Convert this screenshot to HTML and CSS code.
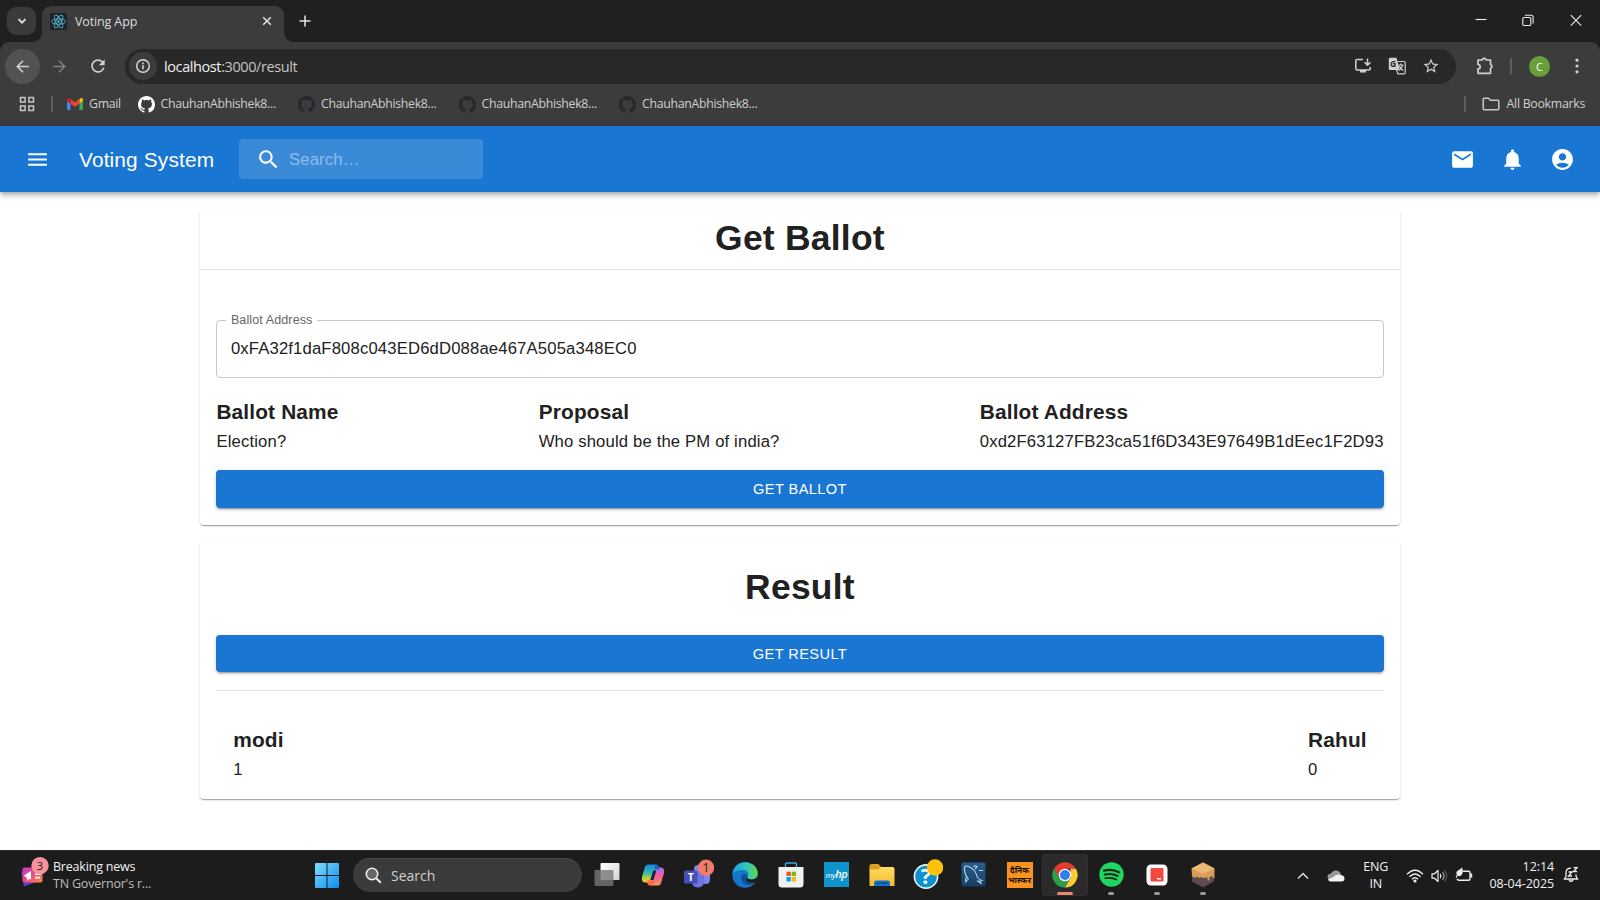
FILE: index.html
```html
<!DOCTYPE html>
<html lang="en">
<head>
<meta charset="utf-8">
<title>Voting App</title>
<link rel="stylesheet" href="styles.css">
</head>
<body>
<svg width="0" height="0" class="defs">
  <defs>
    <symbol id="github" viewBox="0 0 16 16"><path d="M8 0C3.58 0 0 3.58 0 8c0 3.54 2.29 6.53 5.47 7.59.4.07.55-.17.55-.38 0-.19-.01-.82-.01-1.49-2.01.37-2.53-.49-2.69-.94-.09-.23-.48-.94-.82-1.13-.28-.15-.68-.52-.01-.53.63-.01 1.08.58 1.23.82.72 1.21 1.87.87 2.33.66.07-.52.28-.87.51-1.07-1.78-.2-3.64-.89-3.64-3.95 0-.87.31-1.59.82-2.15-.08-.2-.36-1.02.08-2.12 0 0 .67-.21 2.2.82.64-.18 1.32-.27 2-.27s1.36.09 2 .27c1.53-1.04 2.2-.82 2.2-.82.44 1.1.16 1.92.08 2.12.51.56.82 1.27.82 2.15 0 3.07-1.87 3.75-3.65 3.95.29.25.54.73.54 1.48 0 1.07-.01 1.93-.01 2.2 0 .21.15.46.55.38A8.01 8.01 0 0 0 16 8c0-4.42-3.58-8-8-8z"/></symbol>
    <linearGradient id="gWin" x1="0" y1="0" x2="1" y2="1"><stop offset="0" stop-color="#7fdcff"/><stop offset="1" stop-color="#0b8df0"/></linearGradient>
    <linearGradient id="gView" x1="0" y1="0" x2="1" y2="1"><stop offset="0" stop-color="#fff"/><stop offset="1" stop-color="#d4d4d4"/></linearGradient>
    <linearGradient id="gCopA" x1="0" y1="0" x2="0" y2="1"><stop offset="0" stop-color="#1787e8"/><stop offset=".45" stop-color="#2fb8b4"/><stop offset=".75" stop-color="#b5cf3d"/><stop offset="1" stop-color="#ffc52a"/></linearGradient>
    <linearGradient id="gCopB" x1="0" y1="0" x2="0" y2="1"><stop offset="0" stop-color="#b06bf0"/><stop offset=".5" stop-color="#ef5fa0"/><stop offset="1" stop-color="#ff9a4c"/></linearGradient>
    <linearGradient id="gEdge" x1="0" y1="0" x2="1" y2="0"><stop offset="0" stop-color="#1c9ee0"/><stop offset=".5" stop-color="#2fc2c8"/><stop offset="1" stop-color="#62d94f"/></linearGradient>
    <linearGradient id="gFold" x1="0" y1="0" x2="0" y2="1"><stop offset="0" stop-color="#ffdc62"/><stop offset="1" stop-color="#f6bc2c"/></linearGradient>
    <linearGradient id="gNews" x1="0" y1="0" x2="1" y2="1"><stop offset="0" stop-color="#c23bc4"/><stop offset=".5" stop-color="#ee4c83"/><stop offset="1" stop-color="#ff8a45"/></linearGradient>
    <linearGradient id="gSql" x1="0" y1="0" x2="0" y2="1"><stop offset="0" stop-color="#255f8e"/><stop offset="1" stop-color="#163f63"/></linearGradient>
  </defs>
</svg>

<header class="browser">
  <div class="tabstrip">
    <button class="tab-search"><svg width="12" height="12" viewBox="0 0 12 12" class="line"><path d="M2.500 4.200 6 7.700l3.500-3.500" stroke-width="1.900"/></svg></button>
    <div class="tab">
      <svg class="favicon" width="17" height="17" viewBox="0 0 17 17"><rect width="17" height="17" rx="2" fill="#1f2329"/><g fill="none" stroke="#58b8d3" stroke-width=".9"><ellipse cx="8.500" cy="8.500" rx="7" ry="2.700"/><ellipse cx="8.500" cy="8.500" rx="7" ry="2.700" transform="rotate(60 8.500 8.500)"/><ellipse cx="8.500" cy="8.500" rx="7" ry="2.700" transform="rotate(120 8.500 8.500)"/></g><circle cx="8.500" cy="8.500" r="1.300" fill="#58b8d3"/></svg>
      <span class="tab-title">Voting App</span>
      <svg class="line" width="10" height="10" viewBox="0 0 10 10"><path d="M1.200 1.200l7.600 7.600M8.800 1.200 1.200 8.800" stroke-width="1.600"/></svg>
    </div>
    <svg class="line new-tab" width="12" height="12" viewBox="0 0 12 12"><path d="M6 .5v11M.5 6h11" stroke-width="1.600"/></svg>
    <div class="window-controls">
      <svg width="48" height="40" viewBox="0 0 48 40" class="line thin"><path d="M19.500 19.500h11"/></svg>
      <svg width="48" height="40" viewBox="0 0 48 40" class="line thin"><rect x="18.800" y="17.500" width="8" height="8" rx="1.200"/><path d="M20.800 15.300h6.300q2 0 2 2v6.300"/></svg>
      <svg width="48" height="40" viewBox="0 0 48 40" class="line thin"><path d="m18.800 15.200 10.400 10.400m0-10.400L18.800 25.600"/></svg>
    </div>
  </div>

  <div class="toolbar">
    <span class="nav-btn nav-back"><svg width="19" height="19" viewBox="0 0 24 24"><path d="M20 11H7.830l5.590-5.590L12 4l-8 8 8 8 1.410-1.410L7.830 13H20v-2z"/></svg></span>
    <span class="nav-btn nav-forward"><svg width="19" height="19" viewBox="0 0 24 24"><path d="M12 4l-1.410 1.410L16.170 11H4v2h12.170l-5.580 5.590L12 20l8-8z"/></svg></span>
    <span class="nav-btn nav-reload"><svg width="20" height="20" viewBox="0 0 24 24"><path d="M17.650 6.350A7.958 7.958 0 0 0 12 4c-4.420 0-7.990 3.580-7.990 8s3.570 8 7.990 8c3.730 0 6.840-2.550 7.730-6h-2.080A5.990 5.990 0 0 1 12 18c-3.310 0-6-2.690-6-6s2.690-6 6-6c1.660 0 3.140.69 4.220 1.780L13 11h7V4l-2.350 2.350z"/></svg></span>
    <div class="omnibox">
      <span class="site-info"><svg width="16" height="16" viewBox="0 0 16 16"><circle cx="8" cy="8" r="6.300" fill="none" stroke="#dcdcdc" stroke-width="1.400"/><path d="M7.200 7.200h1.600v4H7.200zM7.200 4.600h1.600v1.600H7.200z"/></svg></span>
      <span class="url">localhost<i>:3000/result</i></span>
      <span class="omni-icons">
        <svg width="18" height="18" viewBox="0 0 18 18"><path fill="none" stroke="#d0d0d0" stroke-width="1.500" d="M9 2.500H3q-1.200 0-1.200 1.200v8q0 1.200 1.200 1.200h12q1.200 0 1.200-1.200V10M13.500 1.500v6.500M10.500 5.200l3 3 3-3"/><path d="M6 13h6v2.500H6z"/></svg>
        <svg width="18" height="18" viewBox="0 0 18 18"><path d="M2 .8h6.500L11.700 13H2Q.8 13 .8 12V2Q.8.800 2 .8z"/><text x="2" y="10" font-size="8.500" class="g-letter">G</text><path fill="none" stroke="#d0d0d0" stroke-width="1.200" d="M9.500 4.500h6.500q1.200 0 1.200 1.200v10q0 1.200-1.200 1.200H10L8.500 13M10.200 8h5.300M12.800 6.600V8M14.700 8q-.8 3.600-4 5.500M11.300 9q1.100 3 4 4.500"/></svg>
        <svg width="18" height="18" viewBox="0 0 24 24"><path d="M22 9.240l-7.190-.62L12 2 9.190 8.630 2 9.240l5.460 4.730L5.820 21 12 17.270 18.180 21l-1.630-7.030L22 9.240zM12 15.400l-3.760 2.270 1-4.280-3.320-2.880 4.380-.38L12 6.100l1.710 4.040 4.380.38-3.320 2.880 1 4.280L12 15.400z"/></svg>
      </span>
    </div>
    <svg class="extensions" width="20" height="20" viewBox="0 0 20 20"><path fill="none" stroke="#d0d0d0" stroke-width="1.700" stroke-linejoin="round" d="M3 4h4.300a2 2 0 0 1 3.900 0h4.300v4.500a2 2 0 0 1 0 3.800V17.300H3v-4.400a2.200 2.200 0 0 0 0-4.400z"/></svg>
    <span class="divider toolbar-divider"></span>
    <span class="profile">C</span>
    <svg class="menu-dots" width="6" height="18" viewBox="0 0 6 18"><circle cx="3" cy="3.200" r="1.600"/><circle cx="3" cy="9" r="1.600"/><circle cx="3" cy="14.800" r="1.600"/></svg>
  </div>

  <div class="bookmarks">
    <svg class="apps" width="16" height="16" viewBox="0 0 16 16"><g fill="none" stroke="#c8c8c8" stroke-width="1.500"><path d="M1.500 1.500h4.600v4.600H1.500zM9.900 1.500h4.600v4.600H9.900zM1.500 9.900h4.600v4.600H1.500zM9.900 9.900h4.600v4.600H9.900z"/></g></svg>
    <span class="divider"></span>
    <span class="bookmark gmail"><svg width="16" height="12" viewBox="52 42 88 66"><path fill="#4285f4" d="M58 108h14V74L52 59v43c0 3.320 2.690 6 6 6"/><path fill="#34a853" d="M120 108h14c3.320 0 6-2.690 6-6V59l-20 15"/><path fill="#fbbc04" d="M120 48v26l20-15v-8c0-7.420-8.470-11.650-14.400-7.200"/><path fill="#ea4335" d="M72 74V48l24 18 24-18v26L96 92"/><path fill="#c5221f" d="M52 51v8l20 15V48l-5.600-4.200c-5.940-4.450-14.400-.22-14.400 7.200"/></svg><b>Gmail</b></span>
    <span class="bookmark repo first"><svg width="17" height="17"><use href="#github"/></svg><b>ChauhanAbhishek8...</b></span>
    <span class="bookmark repo"><svg width="17" height="17"><use href="#github"/></svg><b>ChauhanAbhishek8...</b></span>
    <span class="bookmark repo"><svg width="17" height="17"><use href="#github"/></svg><b>ChauhanAbhishek8...</b></span>
    <span class="bookmark repo"><svg width="17" height="17"><use href="#github"/></svg><b>ChauhanAbhishek8...</b></span>
    <span class="all-bookmarks"><span class="divider"></span><svg width="18" height="14" viewBox="0 0 18 14"><path fill="none" stroke="#c8c8c8" stroke-width="1.500" stroke-linejoin="round" d="M1.200 2.200q0-1 1-1h4.300l1.900 2h7.400q1 0 1 1v7.600q0 1-1 1H2.200q-1 0-1-1z"/></svg><b>All Bookmarks</b></span>
  </div>
</header>

<nav class="appbar">
  <svg class="mui menu" viewBox="0 0 24 24"><path d="M3 18h18v-2H3v2zm0-5h18v-2H3v2zm0-7v2h18V6H3z"/></svg>
  <span class="brand">Voting System</span>
  <div class="searchbox">
    <svg class="mui" viewBox="0 0 24 24"><path d="M15.500 14h-.79l-.28-.27C15.410 12.590 16 11.110 16 9.500 16 5.910 13.090 3 9.500 3S3 5.910 3 9.500 5.910 16 9.500 16c1.610 0 3.090-.59 4.230-1.570l.27.28v.79l5 4.990L20.490 19l-4.990-5zm-6 0C7.010 14 5 11.990 5 9.500S7.010 5 9.500 5 14 7.010 14 9.500 11.990 14 9.500 14z"/></svg>
    <span>Search…</span>
  </div>
  <div class="appbar-actions">
    <svg class="mui" viewBox="0 0 24 24"><path d="M20 4H4c-1.100 0-1.990.9-1.990 2L2 18c0 1.100.9 2 2 2h16c1.100 0 2-.9 2-2V6c0-1.100-.9-2-2-2zm0 4l-8 5-8-5V6l8 5 8-5v2z"/></svg>
    <svg class="mui" viewBox="0 0 24 24"><path d="M12 22c1.100 0 2-.9 2-2h-4c0 1.100.89 2 2 2zm6-6v-5c0-3.070-1.640-5.640-4.500-6.320V4c0-.83-.67-1.500-1.500-1.500s-1.500.67-1.500 1.500v.68C7.630 5.360 6 7.920 6 11v5l-2 2v1h16v-1l-2-2z"/></svg>
    <svg class="mui" viewBox="0 0 24 24"><path d="M12 2C6.480 2 2 6.480 2 12s4.480 10 10 10 10-4.480 10-10S17.520 2 12 2zm0 4c1.930 0 3.500 1.570 3.500 3.500S13.930 13 12 13s-3.500-1.570-3.500-3.500S10.070 6 12 6zm0 14c-2.030 0-4.430-.82-6.140-2.880C7.550 15.800 9.680 15 12 15s4.450.8 6.140 2.120C16.430 19.180 14.030 20 12 20z"/></svg>
  </div>
</nav>

<main class="content">
  <section class="card ballot-card">
    <h1 class="card-title">Get Ballot</h1>
    <div class="card-body">
      <fieldset class="field"><legend>Ballot Address</legend>0xFA32f1daF808c043ED6dD088ae467A505a348EC0</fieldset>
      <div class="facts">
        <div><h2>Ballot Name</h2><p>Election?</p></div>
        <div><h2>Proposal</h2><p>Who should be the PM of india?</p></div>
        <div><h2>Ballot Address</h2><p>0xd2F63127FB23ca51f6D343E97649B1dEec1F2D93</p></div>
      </div>
      <button class="btn">GET BALLOT</button>
    </div>
  </section>
  <section class="card result-card">
    <h1 class="card-title">Result</h1>
    <button class="btn">GET RESULT</button>
    <div class="facts tally">
      <div><h2>modi</h2><p>1</p></div>
      <div><h2>Rahul</h2><p>0</p></div>
    </div>
  </section>
</main>

<footer class="taskbar">
  <div class="news">
    <svg width="29" height="32" viewBox="0 0 29 32"><path fill="#5a3fc8" d="m1 14 3 15.500 12-4.500z"/><rect x="2.500" y="10.500" width="20" height="15" rx="2" fill="url(#gNews)"/><path fill="#fff" d="m4 18.500 7-4.500v8.500l-2-.5-1.500 1.500-.8-2.800zM15 16.500h6v1.600h-6zM15 19.800h5v1.600h-5z"/><circle cx="20" cy="8.700" r="8.700" fill="#f6929b"/><text x="20" y="12.500" text-anchor="middle" font-size="11" class="badge-num">3</text></svg>
    <div class="news-text"><b>Breaking news</b><span>TN Governor's r...</span></div>
  </div>
  <svg class="start" width="24" height="25" viewBox="0 0 24 25"><path fill="url(#gWin)" d="M1 0h10.500v12H0V1q0-1 1-1zM12.500 0H23q1 0 1 1v11H12.500zM0 13h11.500v12H1q-1 0-1-1zM12.500 13H24v11q0 1-1 1H12.500z"/></svg>
  <div class="os-search"><svg width="17" height="17" viewBox="0 0 17 17"><circle cx="7" cy="7" r="5.700" fill="#666" stroke="#ededed" stroke-width="1.600"/><path d="m11.200 11.200 4.600 4.600" stroke="#ededed" stroke-width="2"/></svg><span>Search</span></div>
  <div class="dock">
    <span class="slot"><svg width="26" height="26" viewBox="0 0 26 26"><rect x="6.500" y="1" width="19" height="17" rx="1" fill="url(#gView)"/><rect x=".5" y="8" width="19" height="16" rx="1" fill="#777" fill-opacity=".8"/></svg></span>
    <span class="slot"><svg width="26" height="26" viewBox="0 0 26 26"><path fill="url(#gCopA)" d="M8 2.500h8q2 0 3 3l.5 2H16q-2 0-2.700 2.200L10.500 18q-.8 2.500-3 2.500H5.500Q1 20.500 2 15L4.600 6Q5.500 2.500 8 2.500z"/><path fill="url(#gCopB)" d="M18 23.500h-8q-2 0-3-3l-.5-2h2q2 0 2.700-2.200L15.500 8q.8-2.500 3-2.500h2q4.500 0 3.500 5.500L21.400 20q-.9 3.500-3.400 3.500z"/><path fill="#1d2940" d="m13 9 3.200 0-2.700 9H10.300z"/><path fill="#1266c9" d="M15 2.500q3.600 0 4.600 5h-3q-1.500 0-2-2z"/><path fill="#ff6a45" d="M7.500 19q.5 4.500 3.500 4.500 2 0 3-3l.6-2z"/></svg></span>
    <span class="slot"><svg width="31" height="31" viewBox="0 0 31 31" class="teams"><circle cx="15" cy="10" r="4" fill="#7b83eb"/><path fill="#7f85f0" d="M19 13h8v7q0 5-4 5t-4-4z"/><path fill="#6d74e0" d="M9 14h12v8q0 6.500-6 6.500T9 22z"/><rect x="1" y="11.500" width="13.500" height="13" rx="1.500" fill="#464eb8"/><text x="7.800" y="21.800" text-anchor="middle" font-size="10.500" class="teams-t">T</text><circle cx="23" cy="8.700" r="8.200" fill="#f07c67"/><text x="23" y="12.900" text-anchor="middle" font-size="12" class="badge-num">1</text></svg></span>
    <span class="slot"><svg width="26" height="26" viewBox="0 0 26 26"><circle cx="13" cy="13" r="12.700" fill="#1577c9"/><path fill="url(#gEdge)" d="M.5 11.500C1.500 5 6.500.3 13 .3c7.500 0 12.700 5.200 12.700 10.700 0 4-2.700 6.500-6.200 6.500-3 0-4.500-1.300-4-2.500 2-2.500.5-7-4.500-7-4.500 0-8.500 1.500-10.500 3.500z"/><path fill="#0e4f9c" d="M9.500 13.500c-1.500 6 3.500 10.800 9.200 9.600 2-.5 4-1.700 5.300-3.400-2 1-8 1.300-9.500-2-.7-1.500-.5-2.500.9-2.800-.6-2.900-4.700-4.500-5.900-1.400z"/><path fill="#1c1c1c" d="M15.500 15c-.6 1.300.8 2.500 4 2.500 3 0 4.500-1.300 5.500-3l.4 2c-.4 1.800-1 2.800-1.900 3.700-3 1-9.500.5-9.500-3z"/></svg></span>
    <span class="slot"><svg width="26" height="26" viewBox="0 0 26 26"><path fill="none" stroke="#42a8d8" stroke-width="1.400" d="M7.500 6V2q0-1 1-1h9q1 0 1 1v4"/><path fill="#f1f1f1" d="M.5 5h25v17q0 3.500-3.500 3.500H4Q.5 25.500.5 22z"/><path fill="#f25022" d="M8.500 9.700h4.300V14H8.500z"/><path fill="#7fba00" d="M13.700 9.700H18V14h-4.300z"/><path fill="#00a4ef" d="M8.500 15h4.300v4.500H8.500z"/><path fill="#ffb900" d="M13.700 15H18v4.500h-4.300z"/></svg></span>
    <span class="slot"><span class="myhp">my<b>hp</b></span></span>
    <span class="slot"><svg width="26" height="26" viewBox="0 0 26 26"><path fill="#e0a021" d="M.5 4q0-2 2-2h7l2.500 3v4H.5z"/><path fill="url(#gFold)" d="M.5 7.500h9L12 5h11.500q2 0 2 2v17h-25z"/><path fill="#1573c9" d="M5 24v-3.500q0-2 2-2h12q2 0 2 2V24z"/><path fill="#0d4d8d" d="M7.500 20.500h11v1.500h-11z"/></svg></span>
    <span class="slot"><svg width="31" height="31" viewBox="0 0 31 31"><circle cx="14" cy="17.500" r="11.600" fill="#0e91cf" stroke="#eaf7ff" stroke-width="1.600"/><text x="14" y="25.300" text-anchor="middle" font-size="22" class="help-q">?</text><circle cx="23" cy="8.500" r="8.200" fill="#ffc20a"/></svg></span>
    <span class="slot"><svg width="25" height="25" viewBox="0 0 25 25"><rect x=".5" y=".5" width="24" height="24" rx="2" fill="url(#gSql)"/><path fill="none" stroke="#b9d3e6" stroke-width="1.100" d="M6.500 17.500 4.800 20q-.5-3 .7-5.500Q3 9 3.500 6q.5-3 4-1.500 6.500 2 9 11 1.500 2 4.500 3l-2.500.8 2 2.400-4.500-3.200M6 14.500l1.500 3M12.500 4.500q2.500-1.500 3.500.5l-2 2M18 8.500h4"/></svg></span>
    <span class="slot"><span class="bhaskar"><i>दैनिक</i><i>भास्कर</i></span></span>
    <span class="slot active"><svg width="26" height="26" viewBox="0 0 26 26"><path fill="#e33b2e" d="M2.100 6.500A12.600 12.600 0 0 1 23.900 6.700H13L7.500 16z"/><path fill="#fcc934" d="M23.900 6.700A12.600 12.600 0 0 1 12.800 25.600L18.500 16V6.700z"/><path fill="#2f9e4b" d="M12.800 25.600A12.600 12.600 0 0 1 2.100 6.500L7.600 16l5.400 3.200 5.400-3.100z"/><circle cx="13" cy="13" r="6.300" fill="#fff"/><circle cx="13" cy="13" r="5" fill="#2f7df0"/></svg></span>
    <span class="slot running"><svg width="25" height="25" viewBox="0 0 25 25"><circle cx="12.500" cy="12.500" r="12.200" fill="#1ed760"/><g fill="none" stroke="#15251a" stroke-linecap="round"><path stroke-width="2.300" d="M5 8.600q8-2.200 15 1.600"/><path stroke-width="2" d="M5.700 12.600q6.800-1.900 12.900 1.400"/><path stroke-width="1.700" d="M6.300 16.300q6-1.500 11 1.300"/></g></svg></span>
    <span class="slot running"><svg width="22" height="22" viewBox="0 0 22 22"><rect x=".5" y=".5" width="21" height="21" rx="4.500" fill="#fff"/><rect x="4.500" y="4" width="13" height="13.500" rx="1" fill="#f4493f"/><path fill="#fff" d="M11 14h4v1.500h-4z"/></svg></span>
    <span class="slot running"><svg width="24" height="26" viewBox="0 0 24 26"><path fill="#5f4a50" d="M1 9l11 5 11-5v10.500L12 25.500 1 19.500z"/><path fill="#d99d58" d="M12 .5 23.500 6.500v10l-2-1v-1.500l-3 1v3.500l-2-.3v-2.700L12 16l-2-1-2 1-2-1.500-2 1.500-3-2-.5-7.500z"/><path fill="#edb873" d="m12 .5 11.500 6L12 12 .5 6.500z"/></svg></span>
  </div>
  <div class="tray">
    <svg class="line chevron" width="12" height="8" viewBox="0 0 12 8"><path d="M1 6.500 6 1.500l5 5" stroke-width="1.500"/></svg>
    <svg class="cloud" width="18" height="12" viewBox="0 0 18 12"><path fill="#9a9a9a" d="M4 9.500Q.5 9 .5 6.500T4 3.500Q5.500.5 9 .5t5 4L8 9z"/><path fill="#f3f3f3" d="M3.500 11.500q-2 0-2.500-2.500 3-.5 5.500-2 3.500-3.500 7.500-2 3.500.5 3.500 3.500 0 3-3 3z"/></svg>
    <div class="lang">ENG<br>IN</div>
    <svg class="wifi" width="18" height="14" viewBox="0 0 18 14"><g fill="none" stroke="#f0f0f0" stroke-width="1.300"><path d="M1 5.300q8-8 16 0M3.500 7.700q5.500-5.500 11 0M6 10.200q3-3 6 0"/></g><circle cx="9" cy="12" r="1.600" fill="#f0f0f0"/></svg>
    <svg class="sound" width="17" height="14" viewBox="0 0 17 14"><g fill="none" stroke-width="1.200"><path stroke="#f0f0f0" stroke-linejoin="round" d="M1 4.800h2.500L7 1.500v11L3.500 9.200H1zM9.200 4.800q1.500 2.200 0 4.400"/><path stroke="#a5a5a5" d="M11.500 3q3 4 0 8"/><path stroke="#5a5a5a" d="M13.500 1.300q4.500 5.700 0 11.400"/></g></svg>
    <svg class="battery" width="18" height="15" viewBox="0 0 18 15"><path fill="none" stroke="#f0f0f0" stroke-width="1.400" d="M8 4.200h5.500q1.500 0 1.500 1.500v6q0 1.500-1.500 1.500H4q-1.500 0-2-1.500"/><path fill="#f0f0f0" d="M15.500 6.500h1.700v4h-1.700zM7 .3q2 5.700-1 8.200-2 1.300-3.300.3L1.300 11l-.7-.5 1.200-2.600Q.5 5 3 3.500 5.500 2.500 7 .3z"/></svg>
    <div class="clock">12:14<br>08-04-2025</div>
    <svg class="bell" width="16" height="17" viewBox="0 0 16 17"><path fill="none" stroke="#f0f0f0" stroke-width="1.300" d="M8 2.200Q3 2.200 3 7v3.200L1.500 13h13L13 10.200V8.500M6 14q2 2.800 4 0"/><path fill="none" stroke="#f0f0f0" stroke-width="1.300" d="M5.500 6h3.500L5.500 10H9M10.500 1.600H14L10.500 5.500H14"/></svg>
  </div>
</footer>
</body>
</html>
```

FILE: styles.css
```css
* { box-sizing: border-box; }
body {
  margin: 0;
  width: 1600px;
  height: 900px;
  overflow: hidden;
  display: flex;
  flex-direction: column;
  background: #fff;
  color: #212121;
  font-family: "Liberation Sans", Arial, sans-serif;
}
.defs { position: absolute; }
svg { display: block; flex: none; }
button { border: 0; padding: 0; font: inherit; }
b, i { font-weight: 400; font-style: normal; }
.line { fill: none; stroke: #dedede; }
.thin { stroke-width: 1.1; stroke: #eee; }

/* Browser chrome */
.browser {
  height: 126px;
  flex: none;
  background: #1f2120;
  font-family: "Open Sans", "Noto Sans", sans-serif;
  color: #dcdcdc;
}
.browser svg:not(.line) { fill: #d0d0d0; }
.tabstrip { height: 42px; display: flex; align-items: center; padding-left: 7px; }
.tab-search {
  width: 29px; height: 28px; border-radius: 9px; background: #3b3b3b;
  display: flex; align-items: center; justify-content: center;
}
.tab {
  position: relative;
  width: 242px; height: 36px; margin: 6px 0 0 6px; padding: 0 12px 6px 8px;
  border-radius: 9px 9px 0 0; background: #3c3c3c;
  display: flex; align-items: center;
}
/* Flared feet where the tab meets the toolbar */
.tab::before, .tab::after { content: ""; position: absolute; bottom: 0; width: 9px; height: 9px; }
.tab::before { left: -9px; background: radial-gradient(circle at 0 0, transparent 8.5px, #3c3c3c 9px); }
.tab::after { right: -9px; background: radial-gradient(circle at 100% 0, transparent 8.5px, #3c3c3c 9px); }
.tab-title { margin: 0 auto 0 8px; font-size: 12.5px; letter-spacing: -0.13px; }
.new-tab { margin-left: 14.5px; }
.window-controls { display: flex; margin-left: auto; height: 40px; align-self: flex-start; }
.toolbar {
  height: 44px; padding: 4px 0 0 5px; display: flex; align-items: center;
  background: #3c3c3c; border-radius: 9px 9px 0 0;
}
.nav-btn { display: flex; align-items: center; justify-content: center; width: 35px; height: 35px; border-radius: 50%; }
.nav-back { background: #525252; }
.nav-forward { margin-left: 2px; opacity: .45; }
.nav-reload { margin-left: 3px; }
.omnibox {
  width: 1331px; height: 35px; margin-left: 10px; padding: 0 16px 0 4px;
  border-radius: 18px; background: #282828; display: flex; align-items: center;
}
.site-info {
  width: 28px; height: 28px; border-radius: 50%; background: #3c3c3c;
  display: flex; align-items: center; justify-content: center;
}
.url { margin-left: 7px; font-size: 14.5px; letter-spacing: -0.4px; color: #f0f0f0; }
.url i { color: #c4c4c4; }
.omni-icons { margin-left: auto; display: flex; gap: 16px; }
.browser .omni-icons .g-letter { fill: #282828; font-weight: 700; }
.extensions { margin-left: 19px; }
.divider { width: 2px; height: 16px; background: #5e5e5e; flex: none; }
.toolbar-divider { margin-left: 15px; }
.profile {
  width: 21px; height: 21px; margin-left: 17px; border-radius: 50%; background: #689f38;
  color: #fff; font-size: 11px; line-height: 21px; text-align: center;
}
.menu-dots { margin-left: 24px; }
.bookmarks {
  height: 40px; padding: 0 15px 4px 18.5px; display: flex; align-items: center;
  background: #3c3c3c; font-size: 12.3px; color: #cfcfcf;
}
.apps { margin-right: 16px; }
.bookmark { display: flex; align-items: center; }
.gmail { margin-left: 14.5px; width: 70.5px; gap: 6px; letter-spacing: -0.3px; }
.repo { width: 160.500px; gap: 6px; letter-spacing: -0.3px; }
.bookmark b, .all-bookmarks b { margin-top: -1px; }
.browser .repo svg { fill: #24292e; }
.browser .repo.first svg { fill: #fff; }
.all-bookmarks { margin-left: auto; display: flex; align-items: center; letter-spacing: -0.27px; }
.all-bookmarks svg { margin: 0 7px 0 16px; }

/* App bar */
.appbar {
  height: 66px; flex: none; padding: 0 25px; display: flex; align-items: center;
  background: #1976d2; color: #fff; z-index: 1;
  box-shadow: 0 2px 4px -1px rgba(0,0,0,.2), 0 4px 5px rgba(0,0,0,.14), 0 1px 10px rgba(0,0,0,.12);
}
.mui { width: 25px; height: 25px; fill: #fff; }
.brand { margin-left: 29px; width: 160px; padding-top: 1px; font-size: 20.830px; letter-spacing: .0075em; }
.searchbox {
  width: 244px; height: 40px; padding-left: 17px; border-radius: 4px;
  background: rgba(255,255,255,.15); display: flex; align-items: center; gap: 8px;
  font-size: 16.670px; letter-spacing: .00938em;
}
.searchbox span { opacity: .42; padding-top: 1px; }
.appbar-actions { margin-left: auto; display: flex; gap: 25px; }

/* Page */
.content { flex: 1; width: 1200px; margin: 0 auto; padding-top: 17.200px; }
.card {
  border-radius: 4px; background: #fff;
  box-shadow: 0 2px 1px -1px rgba(0,0,0,.2), 0 1px 1px rgba(0,0,0,.14), 0 1px 3px rgba(0,0,0,.12);
}
.card-title {
  margin: 0; padding: 8.300px; text-align: center;
  font-size: 35.420px; line-height: 43.700px; letter-spacing: .00735em;
}
.ballot-card { height: 316px; }
.ballot-card .card-title { border-bottom: 1px solid #e0e0e0; }
.card-body { padding: 43px 16.400px 0; }
.field {
  height: 65px; margin: 0; padding: 10px 13.500px 0; border: 1px solid #c8c8c8; border-radius: 4px;
  font-size: 16.670px; line-height: 24px; letter-spacing: .00938em;
}
.field legend { margin-left: -5px; padding: 0 5px; font-size: 12.500px; line-height: 14px; color: #666; letter-spacing: .00938em; }
.facts { display: flex; justify-content: space-between; margin-top: 17px; }
.facts h2 { margin: 0; font-size: 20.830px; line-height: 33.300px; letter-spacing: .0075em; }
.facts p { margin: 0; font-size: 16.670px; line-height: 25px; letter-spacing: .00938em; }
.btn {
  display: block; width: 100%; height: 38px; margin-top: 16.700px; border-radius: 4px;
  background: #1976d2; color: #fff; font-size: 14.580px; letter-spacing: .02857em;
  box-shadow: 0 3px 1px -2px rgba(0,0,0,.2), 0 2px 2px rgba(0,0,0,.14), 0 1px 5px rgba(0,0,0,.12);
}
.result-card { height: 257px; margin-top: 16.700px; padding: 16px 16.400px 0; }
.result-card .btn { height: 37px; margin-top: 17.300px; }
.tally { margin-top: 17.500px; padding: 32.500px 16.900px 0; border-top: 1px solid #e0e0e0; }

/* Taskbar */
.taskbar {
  height: 50px; flex: none; display: flex; align-items: center; padding: 0 20px;
  background: #1c1c1c; border-top: 1px solid #2b2d2d; color: #f2f2f2;
  font-family: "Open Sans", "Noto Sans", sans-serif; font-size: 12.500px;
}
.news { width: 295px; display: flex; gap: 4px; }
.news > svg { margin-top: -2px; }
.news-text { display: flex; flex-direction: column; line-height: 16.500px; letter-spacing: -.2px; }
.news-text span { color: #bdbdbd; }
.badge-num { fill: #1c1c1c; }
.teams-t { fill: #fff; font-weight: 700; }
.help-q { fill: #fff; font-weight: 700; }
.os-search {
  width: 229px; height: 34px; margin: 0 0 1px 14px; padding-left: 12px; border-radius: 17px;
  background: #3b3b3b; border-top: 1px solid #4a4a4a; display: flex; align-items: center; gap: 9px;
  font-size: 14px; color: #cfcfcf;
}
.dock { display: flex; margin: 0 0 1px 2.500px; }
.slot { position: relative; width: 45.800px; height: 42px; display: flex; align-items: center; justify-content: center; }
.slot > * { margin-bottom: 1px; }
.active { background: #2a2a2a; border-radius: 4px; box-shadow: inset 0 0 0 1px #303030; }
.active::after, .running::after {
  content: ""; position: absolute; bottom: 1px; width: 6px; height: 3px; margin: 0; border-radius: 2px; background: #9a9a9a;
}
.active::after { width: 16px; background: #ee8570; }
.myhp {
  width: 25px; height: 25px; background: #0f93cc; color: #fff; text-align: center;
  font-size: 8px; line-height: 24px; font-style: italic; letter-spacing: -.5px;
}
.myhp b { font-size: 11px; font-style: italic; font-weight: 600; }
.bhaskar {
  width: 26px; height: 26px; padding: 3px 0; background: #f7931e; color: #1c1200; overflow: hidden;
  display: flex; flex-direction: column; align-items: center; font-size: 8.300px; line-height: 10px;
}
.bhaskar i { font-weight: 700; }
.tray { margin-left: 71px; display: flex; align-items: center; flex: none; }
.cloud { margin-left: 18px; }
.lang { width: 30px; margin-left: 16px; text-align: center; line-height: 16.500px; letter-spacing: -.2px; }
.wifi { margin-left: 15px; }
.sound { margin-left: 7px; }
.battery { margin: -2px 0 0 7.500px; }
.clock { width: 70px; margin-left: 11px; text-align: right; line-height: 16.500px; letter-spacing: -.05px; white-space: nowrap; }
.bell { margin: -2px 0 0 9px; }
```
